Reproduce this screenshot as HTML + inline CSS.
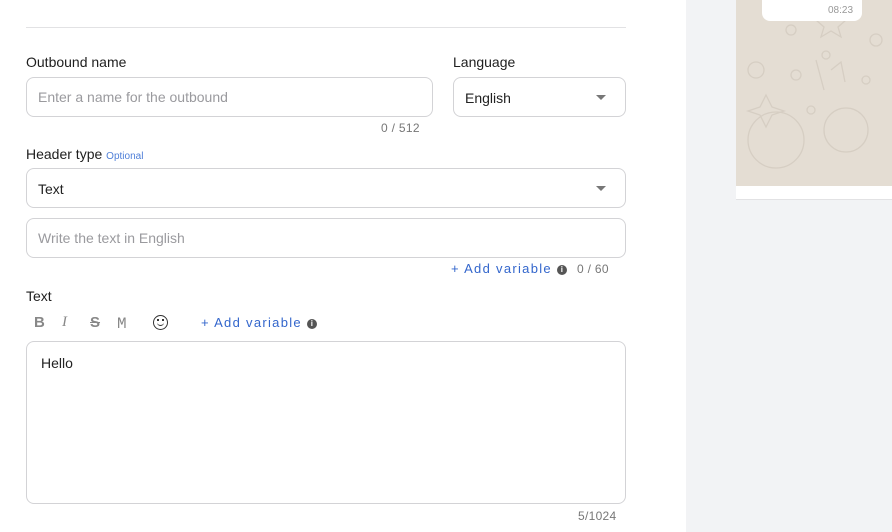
<!DOCTYPE html>
<html><head><style>
*{box-sizing:border-box;margin:0;padding:0}
body{width:892px;height:532px;overflow:hidden;background:#fff;font-family:"Liberation Sans",sans-serif;position:relative;color:#1f1f1f}
.a{position:absolute}
.lbl{font-size:14px;color:#1e1e1e}
.box{position:absolute;border:1px solid #d3d3d6;border-radius:8px;background:#fff}
.ph{position:absolute;font-size:14px;color:#9a9a9e}
.txt{position:absolute;font-size:14px;color:#222}
.cnt{position:absolute;font-size:12px;color:#777;letter-spacing:.3px}
.caret{position:absolute;width:0;height:0;border-left:5px solid transparent;border-right:5px solid transparent;border-top:5px solid #777}
.av{position:absolute;font-size:13px;color:#3366cc;letter-spacing:1.3px;white-space:nowrap}
.info{display:inline-block;width:10px;height:10px;border-radius:50%;background:#555;color:#fff;font-size:8px;line-height:10px;text-align:center;font-weight:bold;vertical-align:1px;letter-spacing:0}
</style></head><body>
<div class="a" style="left:26px;top:27px;width:600px;height:1px;background:#e2e2e4"></div>

<div class="a lbl" style="left:26px;top:54px">Outbound name</div>
<div class="box" style="left:26px;top:77px;width:407px;height:40px"></div>
<div class="ph" style="left:38px;top:89px">Enter a name for the outbound</div>
<div class="cnt" style="left:381px;top:121px">0 / 512</div>

<div class="a lbl" style="left:453px;top:54px">Language</div>
<div class="box" style="left:453px;top:77px;width:173px;height:40px"></div>
<div class="txt" style="left:465px;top:90px">English</div>
<div class="caret" style="left:596px;top:95px"></div>

<div class="a lbl" style="left:26px;top:146px">Header type <span style="font-size:10px;color:#4f7fd8">Optional</span></div>
<div class="box" style="left:26px;top:168px;width:600px;height:40px"></div>
<div class="txt" style="left:38px;top:181px">Text</div>
<div class="caret" style="left:596px;top:186px"></div>

<div class="box" style="left:26px;top:218px;width:600px;height:40px"></div>
<div class="ph" style="left:38px;top:230px">Write the text in English</div>
<div class="av" style="left:451px;top:261px">+ Add variable <span class="info">i</span></div>
<div class="cnt" style="left:577px;top:262px">0 / 60</div>

<div class="a lbl" style="left:26px;top:288px">Text</div>
<div class="a" style="left:34px;top:314px;font-size:15px;color:#888;font-weight:bold">B</div>
<div class="a" style="left:62px;top:314px;font-size:15px;color:#888;font-style:italic;font-family:'Liberation Serif',serif">I</div>
<div class="a" style="left:90px;top:314px;font-size:15px;color:#888;font-weight:bold;text-decoration:line-through">S</div>
<div class="a" style="left:117px;top:315px;font-size:16px;color:#888;font-family:'Liberation Mono',monospace">M</div>
<div class="a" style="left:153px;top:315px;width:15px;height:15px;border:1.5px solid #333;border-radius:50%"></div>
<div class="a" style="left:157px;top:319px;width:2px;height:2px;background:#333"></div>
<div class="a" style="left:162px;top:319px;width:2px;height:2px;background:#333"></div>
<div class="a" style="left:157px;top:322px;width:7px;height:4px;border-bottom:1.5px solid #333;border-radius:0 0 4px 4px"></div>
<div class="av" style="left:201px;top:315px">+ Add variable <span class="info">i</span></div>

<div class="box" style="left:26px;top:341px;width:600px;height:163px"></div>
<div class="txt" style="left:41px;top:355px">Hello</div>
<div class="cnt" style="left:578px;top:509px">5/1024</div>

<div class="a" style="left:686px;top:0;width:206px;height:532px;background:#f2f3f5"></div>
<div class="a" style="left:736px;top:0;width:156px;height:186px;background:#e4ddd3"></div>
<svg class="a" style="left:736px;top:0" width="156" height="186" fill="none" stroke="#d6cec3" stroke-width="1.3">
<circle cx="40" cy="140" r="28"/><circle cx="110" cy="130" r="22"/><circle cx="20" cy="70" r="8"/><circle cx="60" cy="75" r="5"/><circle cx="90" cy="55" r="4"/><circle cx="140" cy="40" r="6"/><circle cx="75" cy="110" r="4"/><circle cx="130" cy="80" r="4"/><circle cx="55" cy="30" r="5"/><path d="M80 60 l8 30 M95 70 l10 -8 l4 20"/><path d="M95 10 l5 10 l10 0 l-8 7 l3 10 l-10 -6 l-10 6 l3 -10 l-8 -7 l10 0z"/><path d="M30 95 l6 12 l12 4 l-12 4 l-6 12 l-6 -12 l-12 -4 l12 -4z"/>
</svg>
<div class="a" style="left:736px;top:186px;width:156px;height:14px;background:#fff;border-bottom:1px solid #e2e2e4"></div>
<div class="a" style="left:762px;top:0;width:100px;height:21px;background:#fff;border-radius:0 0 8px 8px"></div>
<div class="a" style="left:828px;top:5px;font-size:10px;color:#999">08:23</div>
</body></html>
